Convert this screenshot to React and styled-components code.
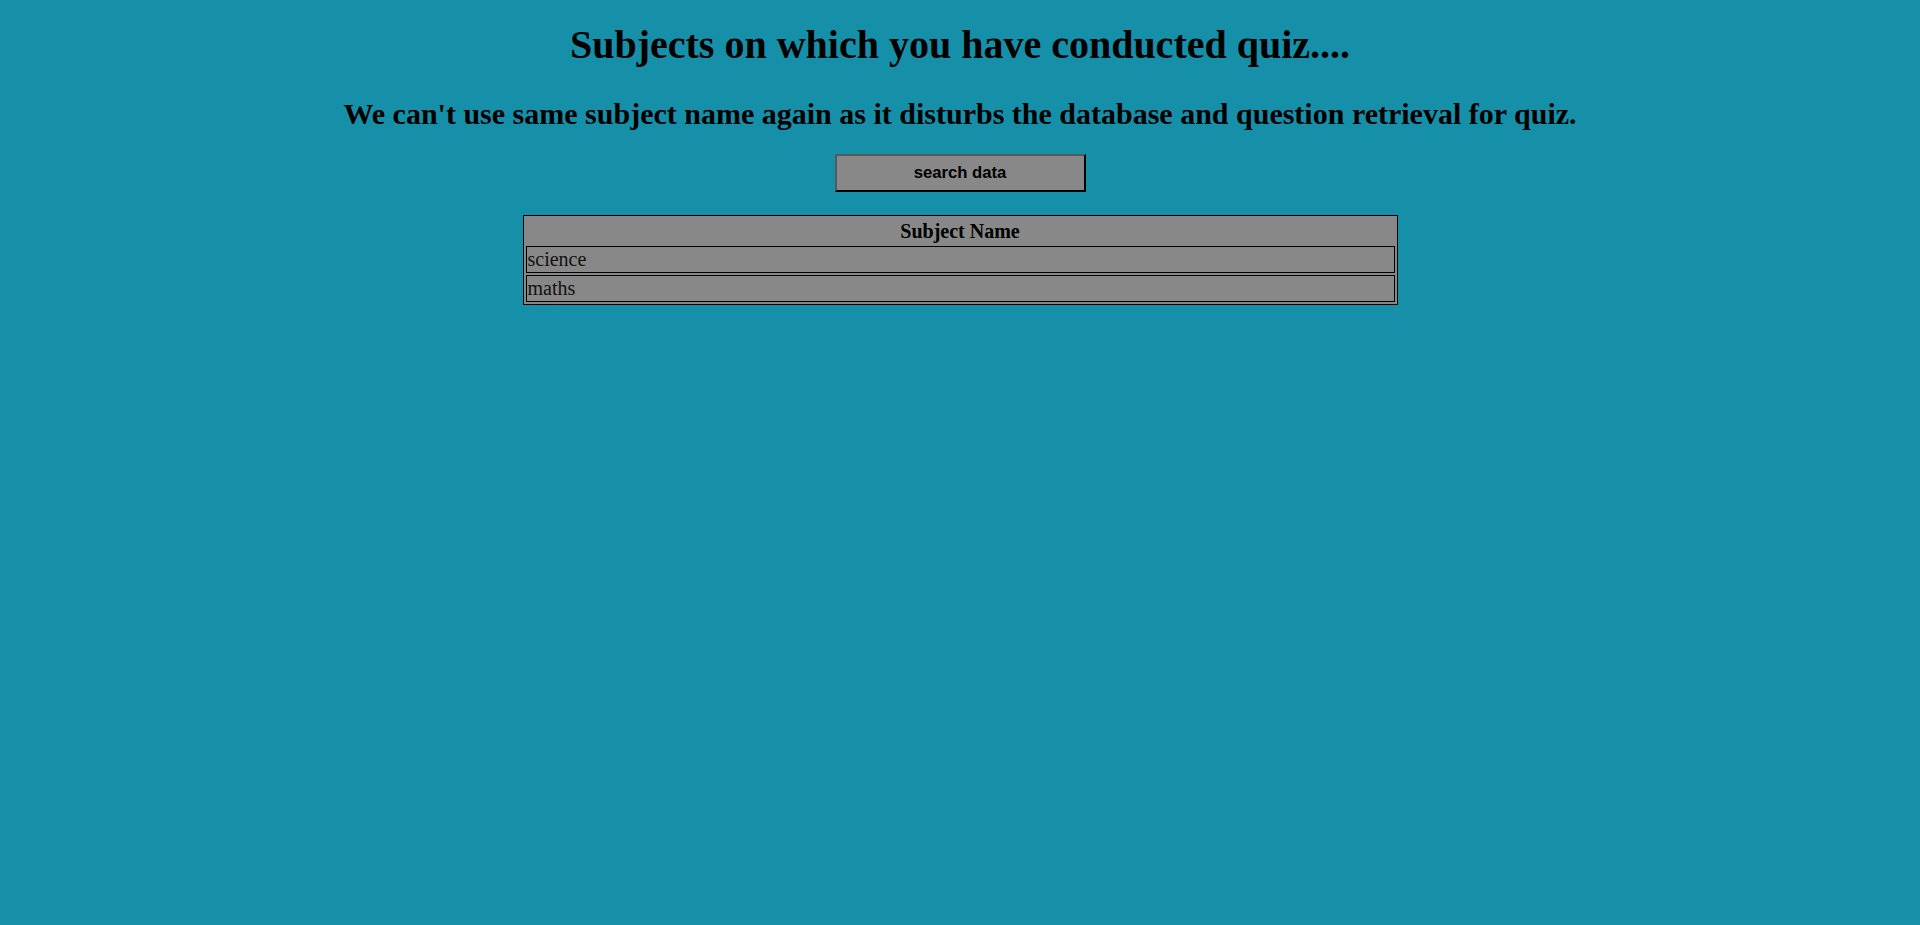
import React from "react";
import styled, { createGlobalStyle } from "styled-components";

const Global = createGlobalStyle`
  html, body {
    margin: 0;
    padding: 0;
    background: #1690a8;
  }
  body {
    min-height: 925px;
    font-family: "Liberation Serif", "Times New Roman", serif;
    color: #000;
  }
`;

const Page = styled.main`
  display: flex;
  flex-direction: column;
  align-items: center;
  min-height: 925px;
  background: #1690a8;
`;

const Title = styled.h1`
  margin: 22px 0 0;
  font-size: 40px;
  font-weight: bold;
  line-height: 46px;
  text-align: center;
`;

const Subtitle = styled.h2`
  margin: 29px 0 0;
  font-size: 30px;
  font-weight: bold;
  line-height: 34px;
  text-align: center;
`;

const SearchButton = styled.button`
  margin-top: 23px;
  width: 251px;
  height: 38px;
  background: #888888;
  border-style: solid;
  border-width: 2px;
  border-color: #575757 #000 #000 #575757;
  font-family: "Liberation Sans", Arial, sans-serif;
  font-weight: bold;
  font-size: 16.67px;
  color: #000;
  padding: 0;
  cursor: pointer;
`;

const Table = styled.table`
  margin-top: 23px;
  width: 875px;
  background: #888888;
  border: 1px solid #000;
  border-spacing: 2px;
  font-size: 20px;
`;

const HeadCell = styled.th`
  height: 26px;
  padding: 0;
  line-height: 26px;
  font-weight: bold;
  text-align: center;
`;

const Cell = styled.td`
  border: 1px solid #000;
  padding: 1px;
  line-height: 23px;
  text-align: left;
  color: #111;
`;

const subjects = ["science", "maths"];

export default function App() {
  return (
    <>
      <Global />
      <Page>
        <Title>Subjects on which you have conducted quiz....</Title>
        <Subtitle>
          We can't use same subject name again as it disturbs the database and question retrieval for quiz.
        </Subtitle>
        <SearchButton type="button">search data</SearchButton>
        <Table>
          <thead>
            <tr>
              <HeadCell>Subject Name</HeadCell>
            </tr>
          </thead>
          <tbody>
            {subjects.map((s) => (
              <tr key={s}>
                <Cell>{s}</Cell>
              </tr>
            ))}
          </tbody>
        </Table>
      </Page>
    </>
  );
}
